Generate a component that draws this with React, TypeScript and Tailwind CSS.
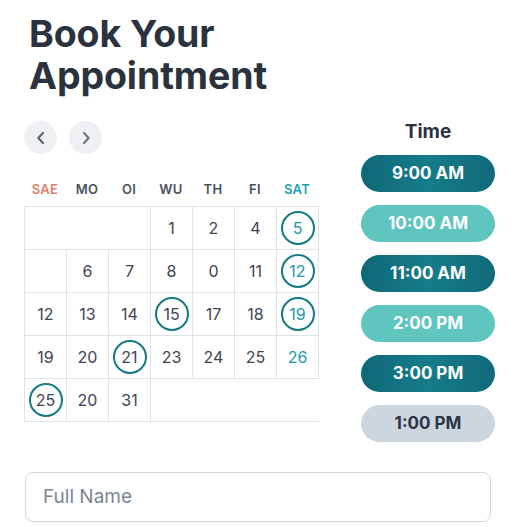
import React from "react";

type Cell = { n?: string; span?: number; circle?: boolean; teal?: boolean; noRight?: boolean };

const rows: Cell[][] = [
  [{ span: 3 }, { n: "1" }, { n: "2" }, { n: "4" }, { n: "5", circle: true, teal: true }],
  [{}, { n: "6" }, { n: "7" }, { n: "8" }, { n: "0" }, { n: "11" }, { n: "12", circle: true, teal: true }],
  [{ n: "12" }, { n: "13" }, { n: "14" }, { n: "15", circle: true }, { n: "17" }, { n: "18" }, { n: "19", circle: true, teal: true }],
  [{ n: "19" }, { n: "20" }, { n: "21", circle: true }, { n: "23" }, { n: "24" }, { n: "25" }, { n: "26", teal: true }],
  [{ n: "25", circle: true }, { n: "20" }, { n: "31" }, { span: 4, noRight: true }],
];

const days = [
  { t: "SAE", c: "text-[#e07f6d]" },
  { t: "MO", c: "text-[#4a5260]" },
  { t: "OI", c: "text-[#4a5260]" },
  { t: "WU", c: "text-[#4a5260]" },
  { t: "TH", c: "text-[#4a5260]" },
  { t: "FI", c: "text-[#4a5260]" },
  { t: "SAT", c: "text-[#1ba0b6]" },
];

const times = [
  { t: "9:00 AM", k: "dark" },
  { t: "10:00 AM", k: "light" },
  { t: "11:00 AM", k: "dark" },
  { t: "2:00 PM", k: "light" },
  { t: "3:00 PM", k: "dark" },
  { t: "1:00 PM", k: "gray" },
];

function spanClass(s?: number) {
  if (s === 3) return "col-span-3";
  if (s === 4) return "col-span-4";
  return "";
}

export default function App() {
  return (
    <div className="w-[527px] h-[527px] bg-white overflow-hidden font-['Inter',sans-serif] pt-[13px]">
      <h1 className="ml-[29px] text-[37.5px] leading-[42px] font-bold text-[#2a323e] tracking-[-0.1px]">
        Book Your
        <br />
        Appointment
      </h1>
      <div className="flex mt-[24px]">
        <div className="ml-[24px] w-[295px]">
          <div className="flex gap-[12px]">
            <button className="w-[33px] h-[33px] rounded-full bg-[#eef0f3] flex items-center justify-center">
              <svg width="16" height="16" viewBox="0 0 24 24" fill="none" stroke="#5b6573" strokeWidth="3.2" strokeLinecap="round" strokeLinejoin="round">
                <path d="M15 4.5l-7 7.5 7 7.5" />
              </svg>
            </button>
            <button className="w-[33px] h-[33px] rounded-full bg-[#eef0f3] flex items-center justify-center">
              <svg width="16" height="16" viewBox="0 0 24 24" fill="none" stroke="#6b7583" strokeWidth="3.2" strokeLinecap="round" strokeLinejoin="round">
                <path d="M9 4.5l7 7.5-7 7.5" />
              </svg>
            </button>
          </div>
          <div className="grid grid-cols-[repeat(7,42px)] mt-[26px] text-[13px] font-semibold tracking-[0.3px]">
            {days.map((d) => (
              <div key={d.t} className={`text-center leading-[18px] ${d.c}`}>{d.t}</div>
            ))}
          </div>
          <div className="grid grid-cols-[repeat(7,42px)] auto-rows-[43px] mt-[8px] border-t border-l border-[#dfe3e8] w-[295px]">
            {rows.map((r, ri) =>
              r.map((c, ci) => (
                <div
                  key={`${ri}-${ci}`}
                  className={`${spanClass(c.span)} border-b border-[#dfe3e8] ${c.noRight ? "" : "border-r"} flex items-center justify-center`}
                >
                  {c.n && (
                    <div
                      className={`w-[34px] h-[34px] rounded-full flex items-center justify-center text-[16px] ${c.circle ? "border-[2.5px] border-[#137a84]" : ""} ${c.teal ? "text-[#1d97ad]" : "text-[#3d4450]"}`}
                    >
                      {c.n}
                    </div>
                  )}
                </div>
              ))
            )}
          </div>
        </div>
        <div className="ml-[42px] w-[134px] flex flex-col">
          <div className="text-center text-[19px] font-bold text-[#2a323e] leading-[24px] mt-[-1px]">Time</div>
          <div className="flex flex-col gap-[13px] mt-[11px]">
            {times.map((t) => (
              <div
                key={t.t}
                className={`h-[37px] rounded-full flex items-center justify-center text-[17px] font-bold ${
                  t.k === "dark"
                    ? "bg-gradient-to-r from-[#0f6877] via-[#167c89] to-[#0f6a79] text-white"
                    : t.k === "light"
                    ? "bg-[#5ec5bf] text-white"
                    : "bg-[#cdd5de] text-[#2c3543]"
                }`}
              >
                {t.t}
              </div>
            ))}
          </div>
        </div>
      </div>
      <div className="ml-[25px] mt-[30px] w-[466px] h-[50px] rounded-[8px] border border-[#cfd6de] flex items-center px-[17px]">
        <span className="text-[19px] text-[#7b8594]">Full Name</span>
      </div>
    </div>
  );
}
